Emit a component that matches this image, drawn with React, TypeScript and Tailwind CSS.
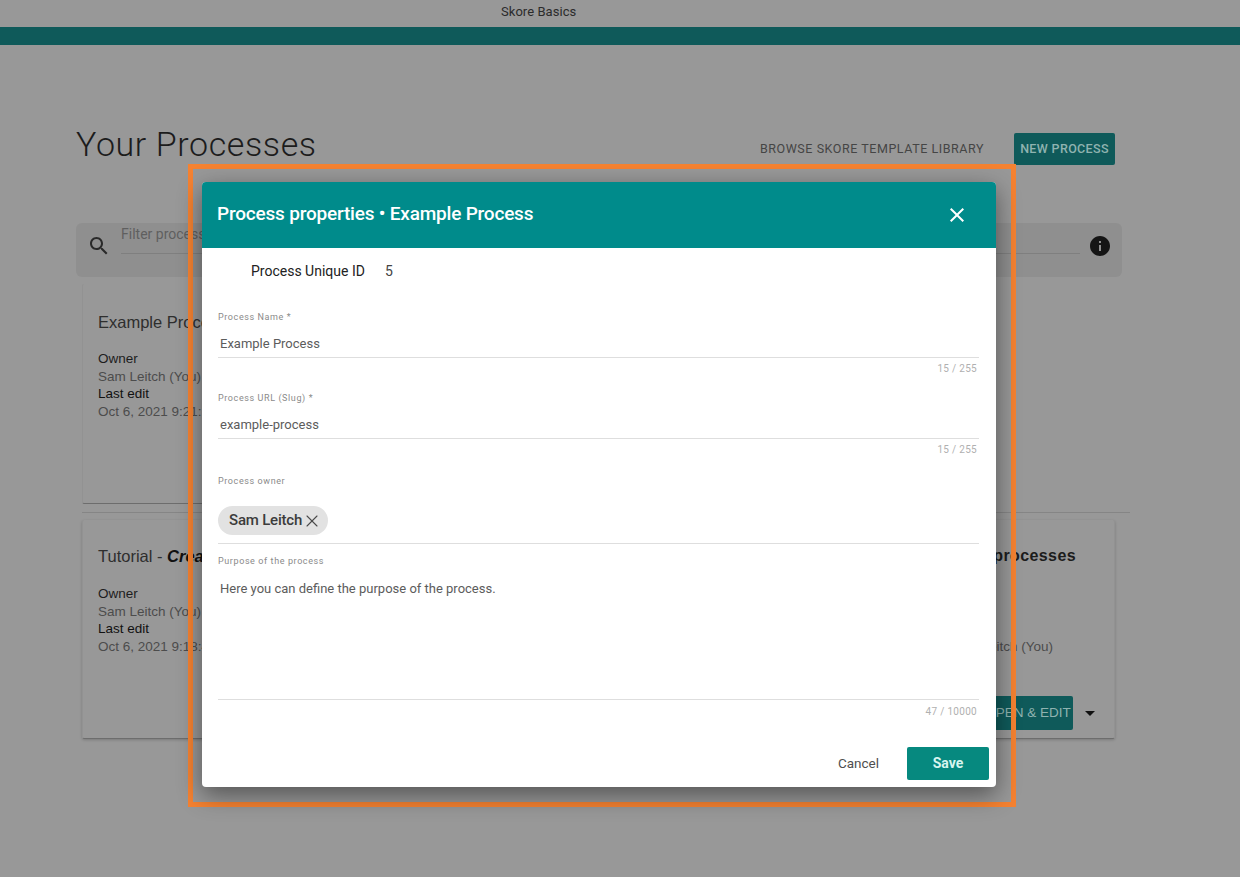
import { X } from "lucide-react";

function Field({ label, value, count }: { label: string; value: string; count: string }) {
  return (
    <div className="flex flex-col">
      <div className="h-[11px] text-[9px] leading-[11px] tracking-[0.6px] text-[#8a8a8a]">{label}</div>
      <div className="mt-[12px] h-[23px] border-b border-[#dedede] pl-[2px] text-[13px] leading-[18px] text-[#5c5c5c]">{value}</div>
      <div className="mt-[5px] h-[12px] pr-[2px] text-right text-[10px] leading-[12px] tracking-[0.3px] text-[#b0b0b0]">{count}</div>
    </div>
  );
}

function CardMeta({ time }: { time: string }) {
  return (
    <div className="mt-[18px] text-[13.5px] leading-[17.7px] text-[#4c4c4c]" style={{ fontFamily: "'Liberation Sans', sans-serif" }}>
      <div className="text-[#1d1d1d]">Owner</div>
      <div>Sam Leitch (You)</div>
      <div className="text-[#111]">Last edit</div>
      <div>{time}</div>
    </div>
  );
}

export default function App() {
  return (
    <div className="relative h-[877px] w-[1240px] overflow-hidden bg-[#989898] font-['Roboto',sans-serif]">
      <div className="h-[27px] pl-[501px] pt-[3px] text-[13px] leading-[18px] tracking-[0.05px] text-[#2b2b2b]">Skore Basics</div>
      <div className="h-[18px] bg-[#0f5a5a]" />

      <div className="px-[76px] pt-[86px]">
        <div className="flex items-start justify-between pr-[49px]">
          <h1 className="text-[34px] leading-[26px] font-light tracking-[0.6px] text-[#1c1c1c]">Your Processes</h1>
          <div className="mt-[2px] flex items-center">
            <span className="text-[12.5px] tracking-[0.55px] text-[#454545]">BROWSE SKORE TEMPLATE LIBRARY</span>
            <span className="ml-[30px] flex h-[32px] w-[101px] items-center justify-center rounded-[2px] bg-[#0f5a5a] text-[12.5px] font-medium tracking-[0.35px] text-[#8fb3b0]">NEW PROCESS</span>
          </div>
        </div>

        <div className="mt-[58px] flex h-[54px] w-[1046px] items-center rounded-[6px] bg-[#8f8f8f] pl-[11px] pr-[10px]">
          <svg width="24" height="24" viewBox="0 0 24 24" fill="#2a2a2a" className="mb-[8px] shrink-0">
            <path d="M15.5 14h-.79l-.28-.27C15.41 12.59 16 11.11 16 9.5 16 5.91 13.09 3 9.5 3S3 5.91 3 9.5 5.91 16 9.5 16c1.61 0 3.09-.59 4.23-1.57l.27.28v.79l5 4.99L20.49 19l-4.99-5zm-6 0C7.01 14 5 11.99 5 9.5S7.01 5 9.5 5 14 7.01 14 9.5 11.99 14 9.5 14z" />
          </svg>
          <div className="mb-auto ml-[10px] h-[31px] flex-1 border-b border-[#7f7f7f] pt-px text-[14px] leading-[20px] text-[#5f5f5f]">Filter processes</div>
          <svg width="24" height="24" viewBox="0 0 24 24" fill="#151515" className="mb-[8px] ml-[8px] shrink-0">
            <path d="M12 2C6.48 2 2 6.48 2 12s4.48 10 10 10 10-4.48 10-10S17.52 2 12 2zm1 15h-2v-6h2v6zm0-8h-2V7h2v2z" />
          </svg>
        </div>

        <div className="ml-[6px] mt-[7px] w-[510px]">
          <div className="h-[220px] rounded-[2px] border-x border-[#929292] border-b border-b-[#6d6d6d] px-[15px] pt-[28px]">
            <div className="text-[16.5px] leading-[20px] text-[#2e2e2e]" style={{ fontFamily: "'Liberation Sans', sans-serif" }}>Example Process</div>
            <CardMeta time="Oct 6, 2021 9:21:17" />
          </div>
        </div>

        <div className="ml-[6px] mt-[8px] h-px w-[1048px] bg-[#858585]" />

        <div className="ml-[6px] mt-[7px] flex h-[219px] w-[1033px] flex-col rounded-[2px] border-x border-[#929292] border-b border-b-[#6d6d6d] shadow-[0_1px_3px_rgba(0,0,0,0.2)]">
          <div className="flex flex-1">
            <div className="flex-1 px-[15px] pt-[26px]">
              <div className="pb-px text-[16.5px] leading-[20px] text-[#2e2e2e]" style={{ fontFamily: "'Liberation Sans', sans-serif" }}>
                Tutorial - <b className="italic text-[#111]">Creating processes</b>
              </div>
              <CardMeta time="Oct 6, 2021 9:18:43" />
            </div>
            <div className="flex w-[420px] flex-col items-end pr-[38px] pt-[26px]" style={{ fontFamily: "'Liberation Sans', sans-serif" }}>
              <div className="text-[16px] font-bold leading-[20px] tracking-[0.4px] text-[#1c1c1c]">Improving processes</div>
              <div className="mt-[72px] pr-[23px] text-[13.5px] leading-[18px] text-[#4c4c4c]">Sam Leitch (You)</div>
            </div>
          </div>
          <div className="flex items-center justify-end pb-[8px] pr-[19px]">
            <span className="flex h-[34px] w-[90px] items-center justify-center rounded-[2px] bg-[#0f5a5a] text-[13.5px] text-[#8fb3b0]" style={{ fontFamily: "'Liberation Sans', sans-serif" }}>OPEN &amp; EDIT</span>
            <span className="ml-[12px] h-0 w-0 border-x-[5px] border-t-[5px] border-x-transparent border-t-[#111]" />
          </div>
        </div>
      </div>

      {/* annotation frame */}
      <div className="absolute left-[188px] top-[164px] h-[643px] w-[828px] border-[5px] border-[#f58231]" />

      {/* dialog */}
      <div className="absolute left-[202px] top-[182px] flex h-[605px] w-[794px] flex-col overflow-hidden rounded-[4px] bg-white shadow-[0_8px_24px_rgba(0,0,0,0.45)]">
        <div className="flex h-[66px] shrink-0 items-center justify-between bg-[#008b8b] pb-[2px] pl-[15px] pr-[27px] text-white">
          <div className="text-[19px] font-medium tracking-[-0.2px]">Process properties • Example Process</div>
          <svg width="24" height="24" viewBox="0 0 24 24" fill="#fff" className="mt-[2px]">
            <path d="M19 6.41L17.59 5 12 10.59 6.41 5 5 6.41 10.59 12 5 17.59 6.41 19 12 13.41 17.59 19 19 17.59 13.41 12z" />
          </svg>
        </div>

        <div className="flex flex-1 flex-col pl-[16px] pr-[17px]">
          <div className="mt-[13px] flex pl-[33px] text-[14px] leading-[20px] text-[#222]">
            <span className="w-[134px]">Process Unique ID</span>
            <span className="text-[#444]">5</span>
          </div>

          <div className="mt-[31px] flex flex-col gap-[18px]">
            <Field label="Process Name *" value="Example Process" count="15 / 255" />
            <Field label="Process URL (Slug) *" value="example-process" count="15 / 255" />
          </div>

          <div className="mt-[20px] h-[11px] text-[9px] leading-[11px] tracking-[0.6px] text-[#8a8a8a]">Process owner</div>
          <div className="h-[57px] border-b border-[#dedede] pt-[14px]">
            <span className="mt-[5px] inline-flex h-[29px] w-[110px] items-center rounded-full bg-[#e2e2e2] pl-[11px] text-[15px] font-medium tracking-[-0.2px] text-[#3c3c3c]">
              Sam Leitch
              <X size={20} strokeWidth={1.3} className="text-[#4a4a4a]" />
            </span>
          </div>

          <div className="mt-[12px] h-[11px] text-[9px] leading-[11px] tracking-[0.6px] text-[#8a8a8a]">Purpose of the process</div>
          <div className="mt-[13px] h-[120px] border-b border-[#dedede] pl-[2px] text-[13px] leading-[18px] text-[#5c5c5c]">Here you can define the purpose of the process.</div>
          <div className="mt-[6px] h-[12px] pr-[2px] text-right text-[10px] leading-[12px] tracking-[0.3px] text-[#b0b0b0]">47 / 10000</div>

          <div className="mt-[29px] flex items-center justify-end">
            <span className="mr-[28px] text-[13.5px] text-[#4f4f4f]">Cancel</span>
            <span className="-mr-[10px] flex h-[33px] w-[82px] items-center justify-center rounded-[2px] bg-[#06897f] text-[14px] font-bold text-[#d7f5ef]">Save</span>
          </div>
        </div>
      </div>
    </div>
  );
}
